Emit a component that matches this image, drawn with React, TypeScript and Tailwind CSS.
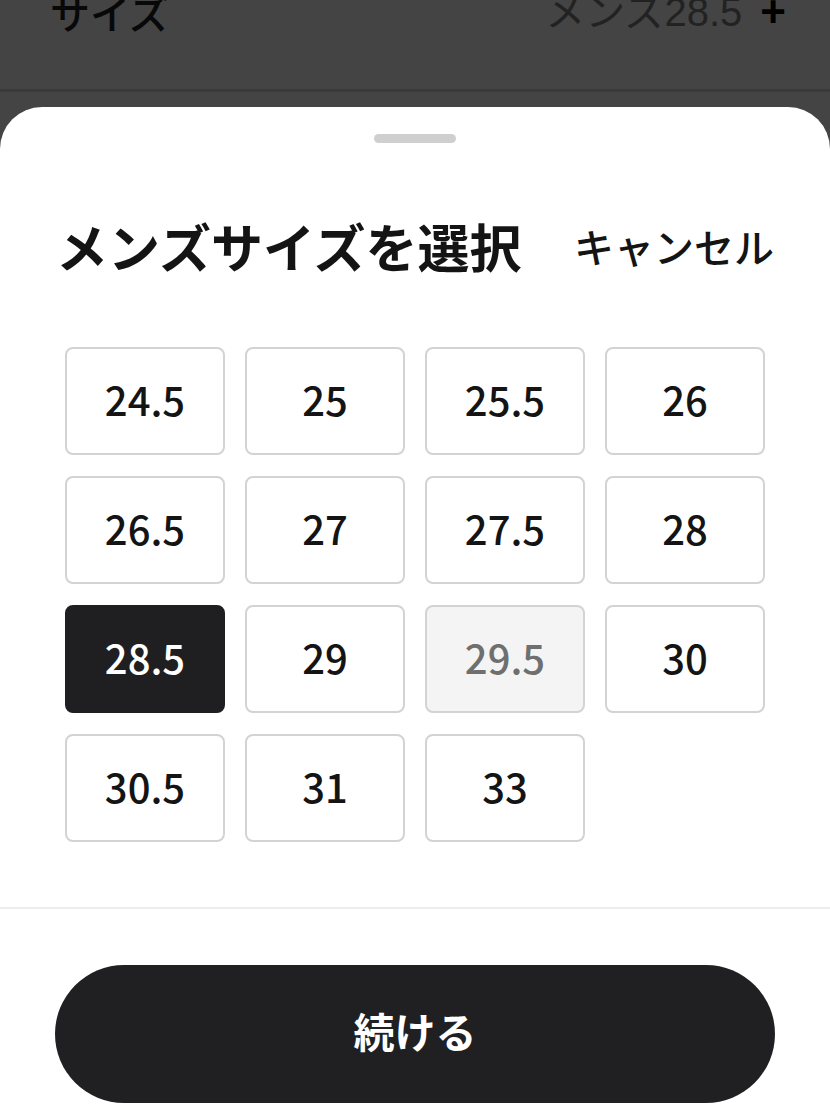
import React from "react";

const sizes = ["24.5","25","25.5","26","26.5","27","27.5","28","28.5","29","29.5","30","30.5","31","33"];

export default function App() {
  const font = { fontFamily: '"Noto Sans CJK JP", "Noto Sans", sans-serif' };
  return (
    <div className="w-[830px] h-[1105px] overflow-hidden bg-[#444444]" style={font}>
      <div className="h-[89px] flex items-start justify-between pl-[50px] pr-[44px] overflow-hidden">
        <span className="text-[40px] leading-none mt-[-8px] text-[#080808] font-medium">サイズ</span>
        <span className="flex items-start mt-[-8px]">
          <span className="text-[40px] leading-none text-[#222222]" style={{ fontFamily: '"Liberation Sans", "Noto Sans CJK JP", sans-serif' }}>メンズ28.5</span>
          <span className="text-[44px] leading-none text-black ml-[18px] mt-[-2px] font-bold" style={{ fontFamily: '"Liberation Sans", sans-serif' }}>+</span>
        </span>
      </div>
      <div className="h-[3px] bg-[#3a3a3a]" />
      <div className="h-[15px]" />
      <div className="bg-white rounded-t-[42px] h-[998px] pt-[27px]">
        <div className="mx-auto w-[82px] h-[9px] rounded-full bg-[#cfcfcf]" />
        <div className="mt-[73px] h-[60px] flex items-center justify-between pl-[56px] pr-[56px]">
          <span className="text-[52px] font-bold text-[#141414] leading-none">メンズサイズを選択</span>
          <span className="text-[40px] font-medium text-[#141414] leading-none">キャンセル</span>
        </div>
        <div className="mt-[71px] mx-[65px] grid grid-cols-4 gap-x-[20px] gap-y-[21px]">
          {sizes.map((s) => {
            const selected = s === "28.5";
            const disabled = s === "29.5";
            const cls = selected
              ? "bg-[#1f1f21] border-[#1f1f21] text-white"
              : disabled
              ? "bg-[#f4f4f4] border-[#d3d3d3] text-[#6f6f6f]"
              : "bg-white border-[#d3d3d3] text-[#141414]";
            return (
              <div key={s} className={`h-[108px] rounded-[8px] border-2 flex items-center justify-center pb-[5px] text-[40px] font-medium ${cls}`}>
                {s}
              </div>
            );
          })}
        </div>
        <div className="mt-[65px] h-[2px] bg-[#ededed]" />
        <div className="mt-[56px] mx-[55px] h-[138px] rounded-full bg-[#202022] flex items-center justify-center pb-[8px]">
          <span className="text-white text-[41px] font-bold leading-none">続ける</span>
        </div>
      </div>
    </div>
  );
}
